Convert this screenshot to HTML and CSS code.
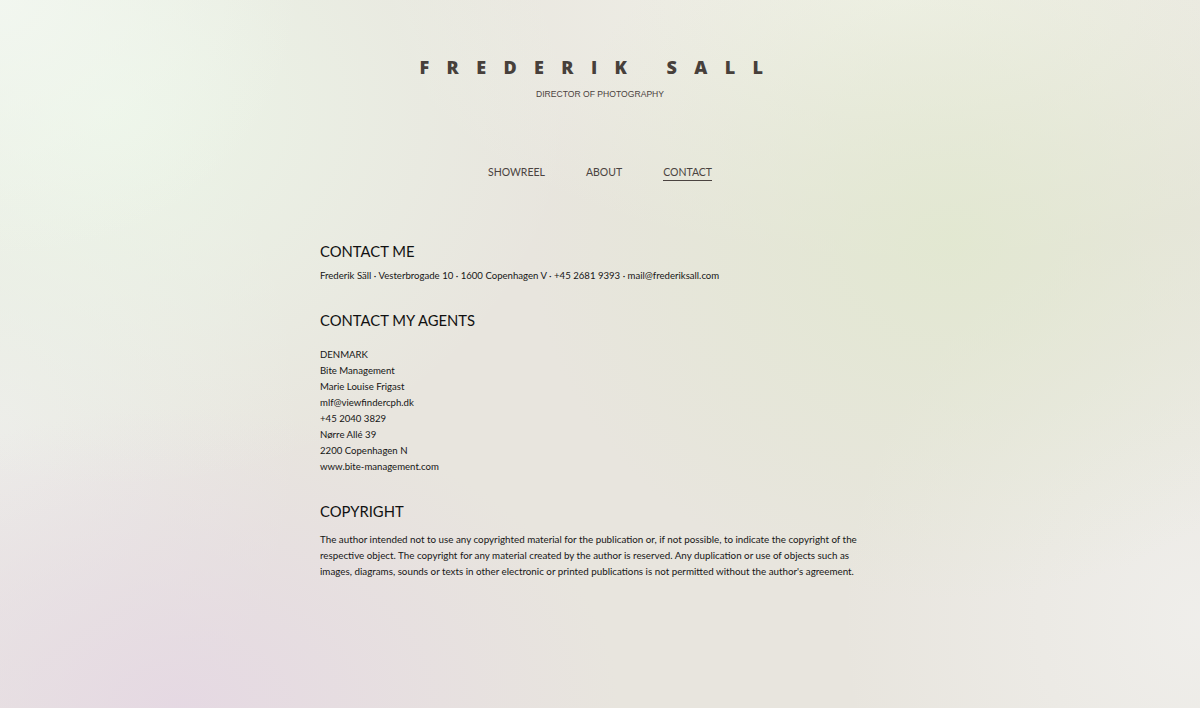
FILE: index.html
```html
<!DOCTYPE html>
<html lang="en">
<head>
<meta charset="utf-8">
<title>Frederik Säll – Contact</title>
<link rel="stylesheet" href="styles.css">
</head>
<body>
<div class="page">
  <header class="masthead">
    <h1 class="name">FREDERIK SALL</h1>
    <p class="role">DIRECTOR OF PHOTOGRAPHY</p>
  </header>
  <nav class="nav">
    <a class="nav-link" href="#">SHOWREEL</a>
    <a class="nav-link" href="#">ABOUT</a>
    <a class="nav-link active" href="#">CONTACT</a>
  </nav>
  <main class="content">
    <section class="block">
      <h2 class="heading">CONTACT ME</h2>
      <p class="text">Frederik Säll · Vesterbrogade 10 · 1600 Copenhagen V · +45 2681 9393 · mail@frederiksall.com</p>
    </section>
    <section class="block">
      <h2 class="heading">CONTACT MY AGENTS</h2>
      <p class="text agents">DENMARK<br>Bite Management<br>Marie Louise Frigast<br>mlf@viewfindercph.dk<br>+45 2040 3829<br>Nørre Allé 39<br>2200 Copenhagen N<br>www.bite-management.com</p>
    </section>
    <section class="block">
      <h2 class="heading">COPYRIGHT</h2>
      <p class="text copy">The author intended not to use any copyrighted material for the publication or, if not possible, to indicate the copyright of the respective object. The copyright for any material created by the author is reserved. Any duplication or use of objects such as images, diagrams, sounds or texts in other electronic or printed publications is not permitted without the author's agreement.</p>
    </section>
  </main>
</div>
</body>
</html>
```
FILE: styles.css
```css
html, body {
  margin: 0;
  padding: 0;
  height: 100%;
}
body {
  font-family: Lato, "Noto Sans", sans-serif;
  color: #1e1c1c;
  background-color: #e8e5de;
  background-image:
    radial-gradient(ellipse 300px 260px at 0px 0px, rgba(242, 247, 240, 0.95), rgba(242, 247, 240, 0) 100%),
    radial-gradient(ellipse 460px 380px at 110px 110px, rgba(236, 246, 232, 0.95), rgba(236, 246, 232, 0) 100%),
    radial-gradient(ellipse 420px 360px at 950px 240px, rgba(225, 232, 207, 0.85), rgba(225, 232, 207, 0) 100%),
    radial-gradient(ellipse 440px 300px at 180px 708px, rgba(229, 216, 227, 0.95), rgba(229, 216, 227, 0) 100%),
    radial-gradient(ellipse 360px 400px at 1200px 620px, rgba(240, 239, 236, 0.9), rgba(240, 239, 236, 0) 100%),
    radial-gradient(ellipse 520px 260px at 900px 0px, rgba(242, 243, 234, 0.9), rgba(242, 243, 234, 0) 100%),
    radial-gradient(ellipse 300px 400px at 0px 420px, rgba(238, 238, 236, 0.8), rgba(238, 238, 236, 0) 100%);
  min-height: 708px;
}
.page {
  display: flex;
  flex-direction: column;
  align-items: center;
  padding-top: 56px;
}
.masthead {
  display: flex;
  flex-direction: column;
  align-items: center;
}
.name {
  margin: 0;
  font-family: "Open Sans", sans-serif;
  font-weight: 800;
  font-size: 18px;
  line-height: 22px;
  letter-spacing: 17.4px;
  word-spacing: 0;
  color: #47403b;
}
.role {
  margin: 10px 0 0;
  font-family: "Liberation Sans", Arial, sans-serif;
  font-size: 8.6px;
  line-height: 12px;
  color: #4a423e;
}
.nav {
  display: flex;
  gap: 41px;
  margin-top: 65px;
}
.nav-link {
  font-size: 10.5px;
  line-height: 14px;
  color: #4a4340;
  text-decoration: none;
  padding-bottom: 1px;
  border-bottom: 1.5px solid transparent;
}
.nav-link.active {
  border-bottom-color: #4a4340;
}
.content {
  width: 560px;
  margin-top: 60px;
  display: flex;
  flex-direction: column;
  gap: 26px;
}
.heading {
  margin: 0;
  font-weight: 400;
  font-size: 14.8px;
  line-height: 20px;
  color: #111;
}
.text {
  margin: 7px 0 0;
  font-size: 9.6px;
  line-height: 16px;
  color: #161616;
}
.agents {
  margin-top: 17px;
}
.copy {
  margin-top: 10px;
  width: 548px;
  font-size: 9.8px;
}
```
